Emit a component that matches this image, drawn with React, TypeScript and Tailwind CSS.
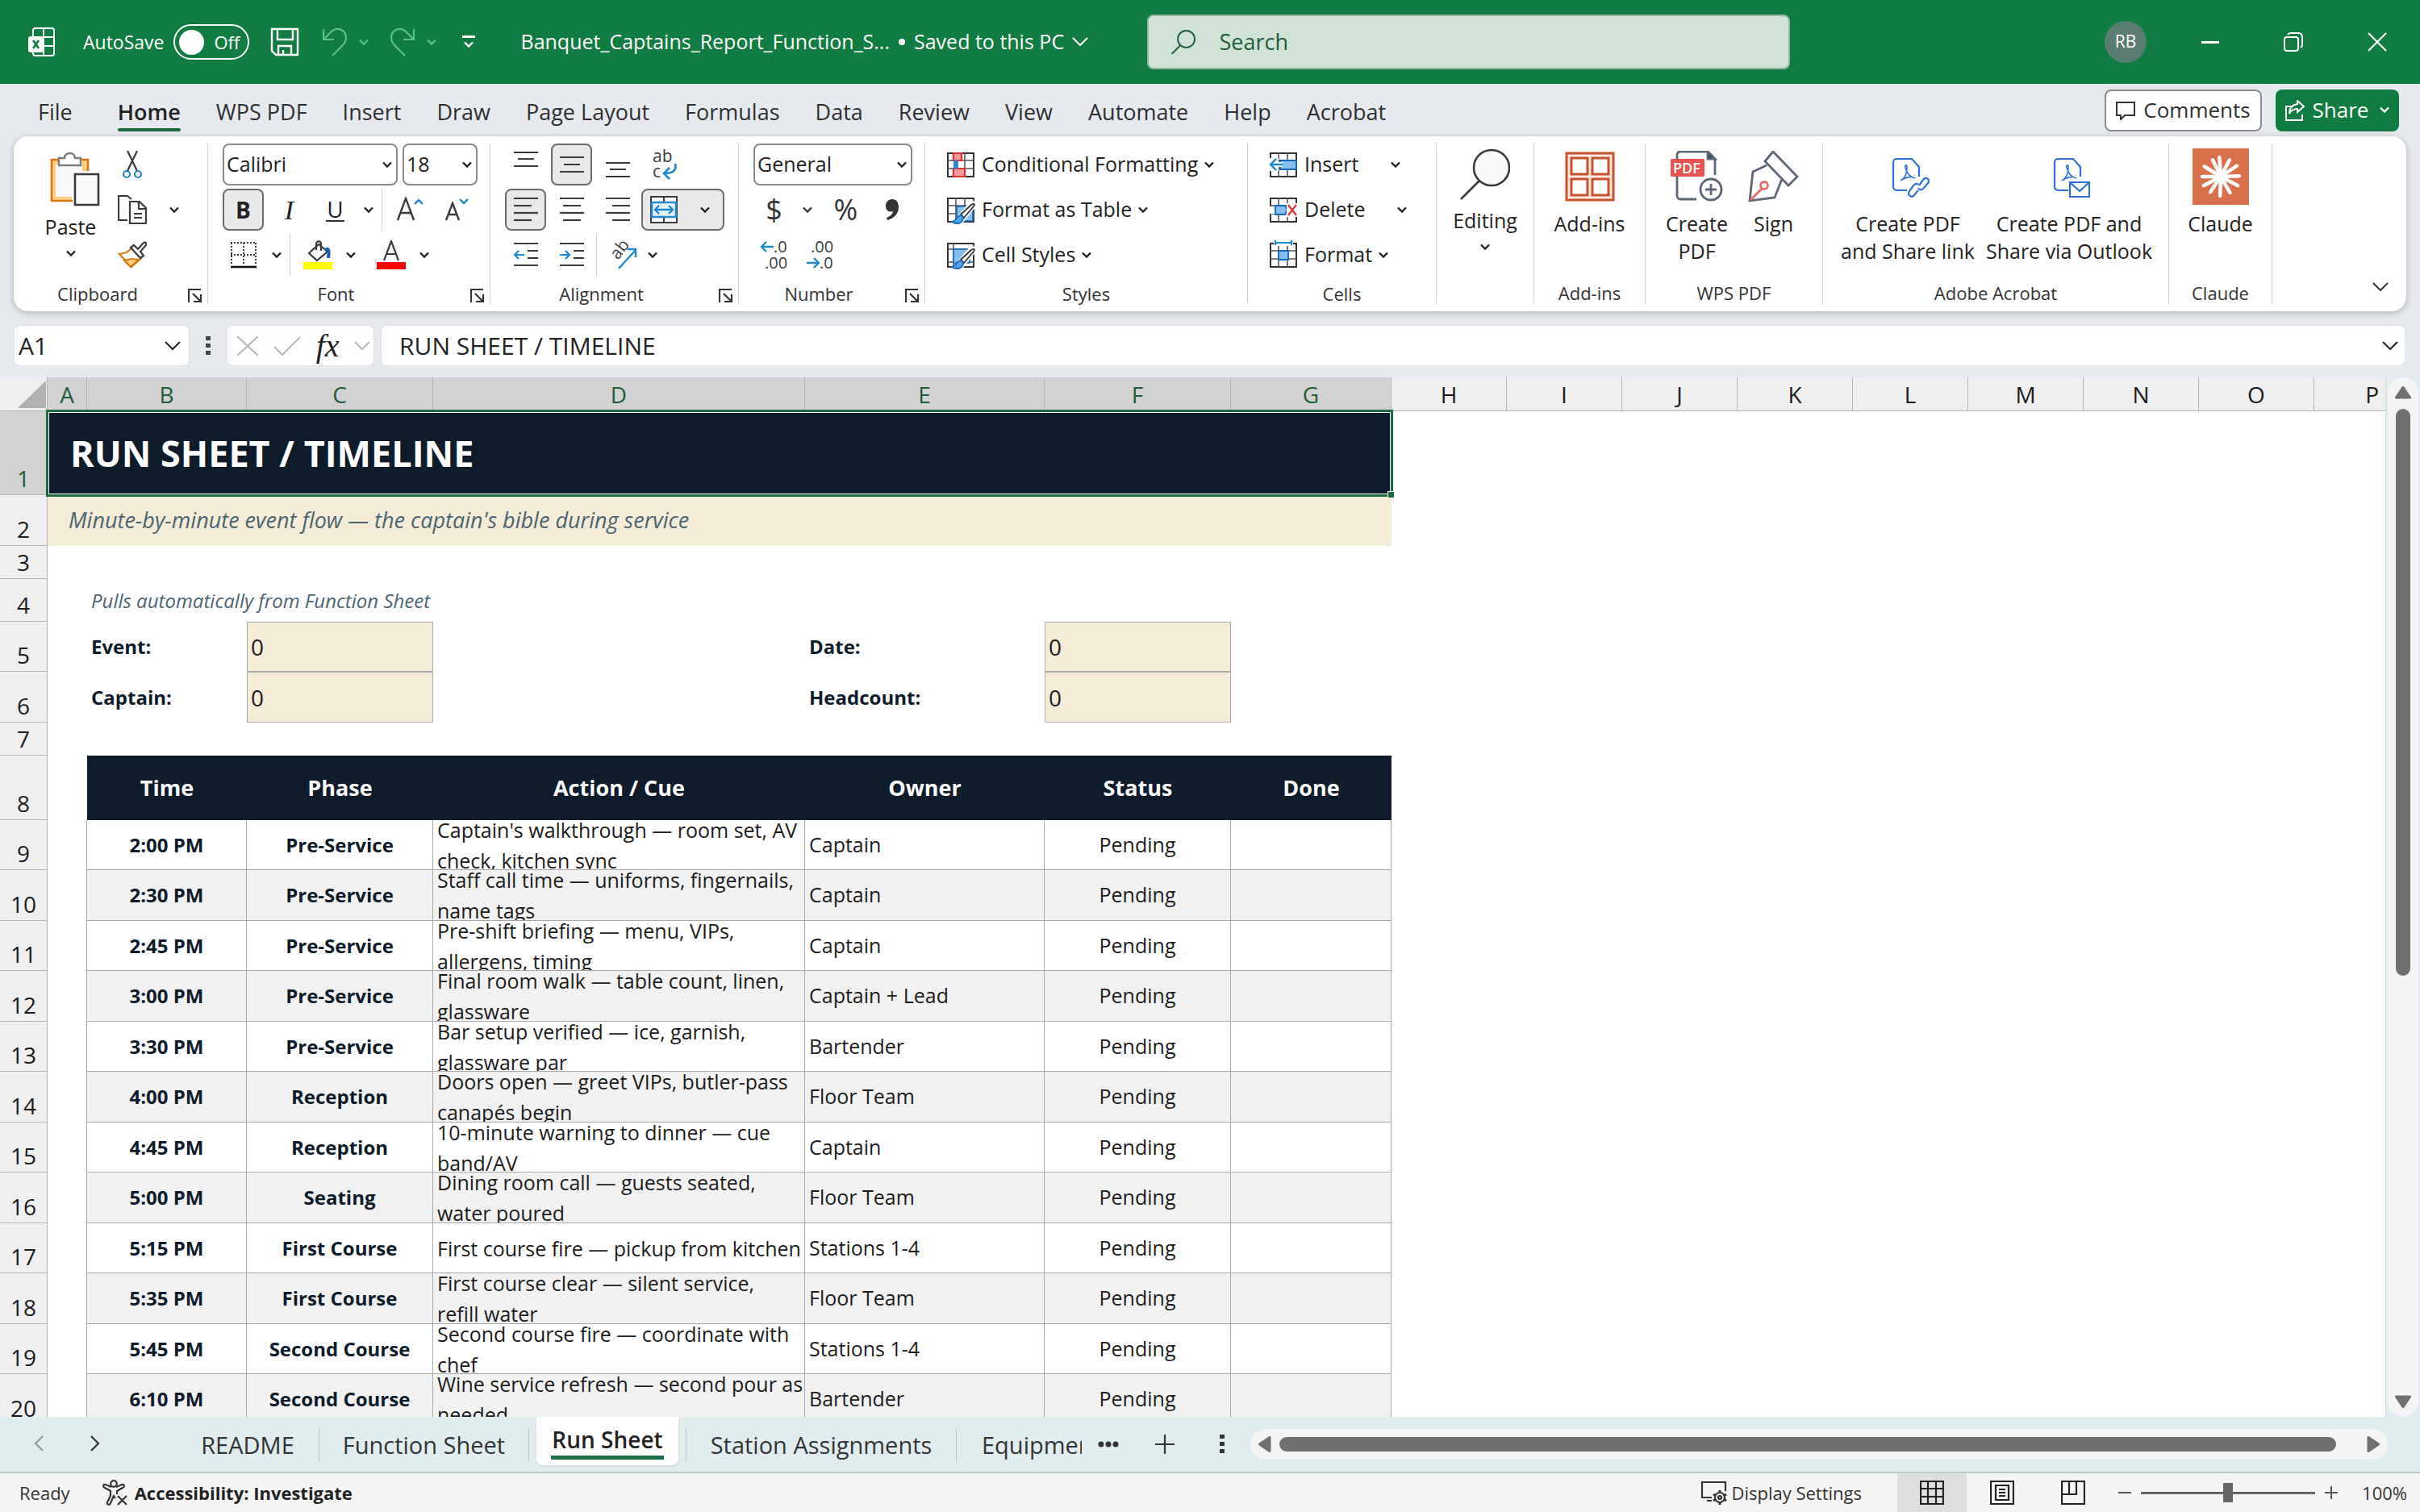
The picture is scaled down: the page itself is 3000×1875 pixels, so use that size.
import type { ReactNode } from 'react';
import clsx from 'clsx';

const tabs = ['File', 'Home', 'WPS PDF', 'Insert', 'Draw', 'Page Layout', 'Formulas', 'Data', 'Review', 'View', 'Automate', 'Help', 'Acrobat'];

const columns = [
	{ name: 'A', width: 'w-[49px]' },
	{ name: 'B', width: 'w-[198px]' },
	{ name: 'C', width: 'w-[231px]' },
	{ name: 'D', width: 'w-[461px]' },
	{ name: 'E', width: 'w-[297px]' },
	{ name: 'F', width: 'w-[231px]' },
	{ name: 'G', width: 'w-[199px]' },
	{ name: 'H', width: 'w-[143px]' },
	{ name: 'I', width: 'w-[143px]' },
	{ name: 'J', width: 'w-[143px]' },
	{ name: 'K', width: 'w-[143px]' },
	{ name: 'L', width: 'w-[143px]' },
	{ name: 'M', width: 'w-[143px]' },
	{ name: 'N', width: 'w-[143px]' },
	{ name: 'O', width: 'w-[143px]' },
	{ name: 'P', width: '' },
];

const events = [
	{ time: '2:00 PM', phase: 'Pre-Service', action: "Captain's walkthrough — room set, AV\ncheck, kitchen sync", owner: 'Captain' },
	{ time: '2:30 PM', phase: 'Pre-Service', action: 'Staff call time — uniforms, fingernails,\nname tags', owner: 'Captain' },
	{ time: '2:45 PM', phase: 'Pre-Service', action: 'Pre-shift briefing — menu, VIPs,\nallergens, timing', owner: 'Captain' },
	{ time: '3:00 PM', phase: 'Pre-Service', action: 'Final room walk — table count, linen,\nglassware', owner: 'Captain + Lead' },
	{ time: '3:30 PM', phase: 'Pre-Service', action: 'Bar setup verified — ice, garnish,\nglassware par', owner: 'Bartender' },
	{ time: '4:00 PM', phase: 'Reception', action: 'Doors open — greet VIPs, butler-pass\ncanapés begin', owner: 'Floor Team' },
	{ time: '4:45 PM', phase: 'Reception', action: '10-minute warning to dinner — cue\nband/AV', owner: 'Captain' },
	{ time: '5:00 PM', phase: 'Seating', action: 'Dining room call — guests seated,\nwater poured', owner: 'Floor Team' },
	{ time: '5:15 PM', phase: 'First Course', action: 'First course fire — pickup from kitchen', owner: 'Stations 1-4' },
	{ time: '5:35 PM', phase: 'First Course', action: 'First course clear — silent service,\nrefill water', owner: 'Floor Team' },
	{ time: '5:45 PM', phase: 'Second Course', action: 'Second course fire — coordinate with\nchef', owner: 'Stations 1-4' },
	{ time: '6:10 PM', phase: 'Second Course', action: 'Wine service refresh — second pour as\nneeded', owner: 'Bartender' },
];

/* ---------- icons ---------- */

function Chevron({ className = 'w-3' }: { className?: string }) {
	return (
		<svg viewBox="0 0 12 9" className={clsx('shrink-0', className)} fill="none" stroke="currentColor" strokeWidth="2.4">
			<path d="M1 1.5l5 5 5-5" />
		</svg>
	);
}

function ThinChevron({ className = 'w-5' }: { className?: string }) {
	return (
		<svg viewBox="0 0 20 12" className={clsx('shrink-0', className)} fill="none" stroke="currentColor" strokeWidth="2">
			<path d="M1 1l9 9 9-9" />
		</svg>
	);
}

function Lines({ rows }: { rows: [number, number, number][] }) {
	return (
		<svg viewBox="0 0 32 32" className="w-8" stroke="#3b3b3b" strokeWidth="2.2">
			{rows.map(([x1, x2, y]) => (
				<path key={y} d={`M${x1} ${y}H${x2}`} />
			))}
		</svg>
	);
}

function ExcelIcon() {
	return (
		<svg viewBox="0 0 34 36" className="w-[34px]" fill="none" stroke="white" strokeWidth="2">
			<path d="M6 12V4a3 3 0 013-3h20a3 3 0 013 3v28a3 3 0 01-3 3H9a3 3 0 01-3-3v-1M19 1v11M19 12h13M19 12v22M19 23h13" />
			<rect x="0" y="11" width="19" height="20" rx="3" fill="white" stroke="none" />
			<path d="M6 16l7 10M13 16L6 26" stroke="#107c41" strokeWidth="2.6" />
		</svg>
	);
}

function SaveIcon() {
	return (
		<svg viewBox="0 0 36 36" className="w-9" fill="none" stroke="white" strokeWidth="2.4">
			<path d="M2 2h32v32H7l-5-5zM9 2v13h19V2M10 34V23h16v11M16 34v-6" />
		</svg>
	);
}

function UndoIcon({ flip }: { flip?: boolean }) {
	return (
		<svg viewBox="0 0 32 36" className={clsx('w-8', flip && '-scale-x-100')} fill="none" stroke="#5cc08b" strokeWidth="2.2">
			<path d="M2 2v13h13M2 15L12 5c6-6 18-3 18 8 0 4-2 7-5 10L13 35" />
		</svg>
	);
}

function PasteIcon() {
	return (
		<svg viewBox="-10 -1 72 69" className="w-[72px]" fill="none">
			<path d="M2 11h44v46H2z" fill="#f8f8f8" />
			<path d="M10 13H4v46h23M40 13h3v11" stroke="#ffcf7f" strokeWidth="6" />
			<path d="M10 10H2v51h26M36 10h11v14" stroke="#d9770f" strokeWidth="2.6" />
			<path d="M11 17V8h7c0-8 13-8 13 0h7v9z" fill="#fff" stroke="#7b7b7b" strokeWidth="2.4" />
			<path d="M31 28h29v38H31z" fill="#fafafa" stroke="#3b3b3b" strokeWidth="2.6" />
		</svg>
	);
}

function CutIcon() {
	return (
		<svg viewBox="0 0 26 36" className="w-[26px]" fill="none" strokeWidth="2.2">
			<path d="M7 1l12 25M19 1L7 26" stroke="#3b3b3b" />
			<circle cx="6" cy="30" r="4" stroke="#1e88cc" />
			<circle cx="20" cy="30" r="4" stroke="#1e88cc" />
		</svg>
	);
}

function CopyIcon() {
	return (
		<svg viewBox="0 0 36 36" className="w-9" fill="#fafafa" stroke="#3b3b3b" strokeWidth="2.2">
			<path d="M12 31H1V1h11l5 4" />
			<path d="M15 8h12l8 8v19H15z" />
			<path d="M26 8v9h9M20 23h10M20 28h10" fill="none" />
		</svg>
	);
}

function BrushIcon() {
	return (
		<svg viewBox="0 0 36 34" className="w-9" fill="none" strokeWidth="2.2">
			<path d="M2 16l9-2 6-5 12 12-12 11z" fill="#fff" stroke="#d9770f" />
			<path d="M8 24l9-2 9 1-10 9z" fill="#ffcf7f" stroke="#d9770f" />
			<path d="M16 8l4-3 5 5 6-7c3-3 6 0 3 3l-6 7 4 5-4 3z" fill="#fff" stroke="#3b3b3b" />
		</svg>
	);
}

function BordersIcon() {
	return (
		<svg viewBox="0 0 34 34" className="w-[34px]" fill="none" stroke="#3b3b3b" strokeWidth="2">
			<path d="M1 2h32M2 2v26M32 2v26M17 2v26M1 17h32" strokeDasharray="2 2" />
			<path d="M1 32h32" stroke="#111" strokeWidth="2.6" />
		</svg>
	);
}

function FillIcon() {
	return (
		<svg viewBox="0 0 36 36" className="w-9" fill="none">
			<path d="M7 16L19 5l11 9-13 11z" fill="#fff" stroke="#3b3b3b" strokeWidth="2.2" />
			<path d="M16 12V5c0-5 6-5 6 0v8" stroke="#3b3b3b" strokeWidth="2.2" />
			<path d="M27 12c5-4 5 2 4 10" stroke="#155fa8" strokeWidth="4" />
			<path d="M0 27h36v9H0z" fill="#ff0" />
		</svg>
	);
}

function FontColorIcon() {
	return (
		<svg viewBox="0 0 36 36" className="w-9" fill="none">
			<path d="M9 25L18 1l9 24M12 17h12" stroke="#3b3b3b" strokeWidth="2.2" />
			<path d="M0 27h36v9H0z" fill="#f00" />
		</svg>
	);
}

function LetterSize({ up }: { up?: boolean }) {
	return (
		<svg viewBox="0 0 34 32" className="w-[34px]" fill="none" strokeWidth="2.4">
			<path d={up ? 'M2 29L12 2l10 27M5 20h14' : 'M5 29L13 8l8 21M8 22h11'} stroke="#3b3b3b" />
			<path d={up ? 'M23 9l5-5 5 5' : 'M22 3l5 5 5-5'} stroke="#1e88cc" />
		</svg>
	);
}

function WrapIcon() {
	return (
		<svg viewBox="0 0 34 42" className="w-[34px] overflow-visible" fill="none">
			<text x="2" y="18" fontSize="21" fill="#3b3b3b" fontFamily="Open Sans">ab</text>
			<text x="2" y="37" fontSize="21" fill="#3b3b3b" fontFamily="Open Sans">c</text>
			<path d="M30 20c2 8-2 12-14 12M23 25l-7 7 7 7" stroke="#1e88cc" strokeWidth="2.6" />
		</svg>
	);
}

function MergeIcon() {
	return (
		<svg viewBox="0 0 34 34" className="w-[34px]" fill="none">
			<path d="M1 1h32v32H1z" fill="#fff" stroke="#3b3b3b" strokeWidth="2" />
			<path d="M17 1v8M17 26v7" stroke="#3b3b3b" strokeWidth="2" />
			<path d="M2 8h30v18H2z" fill="#e4f2fc" stroke="#1e88cc" strokeWidth="2.4" />
			<path d="M6 17h22M11 12l-5 5 5 5M23 12l5 5-5 5" stroke="#1e88cc" strokeWidth="2.4" />
		</svg>
	);
}

function IndentIcon({ out }: { out?: boolean }) {
	return (
		<svg viewBox="0 0 32 32" className="w-8" fill="none" strokeWidth="2.2">
			<path d="M1 2h30M18 11h13M18 20h13M1 29h30" stroke="#3b3b3b" />
			<path d={out ? 'M14 16H2M7 11l-5 5 5 5' : 'M1 16h12M8 11l5 5-5 5'} stroke="#1e88cc" />
		</svg>
	);
}

function OrientationIcon() {
	return (
		<svg viewBox="0 0 36 36" className="w-9 overflow-visible" fill="none">
			<text x="0" y="0" fontSize="21" fill="#3b3b3b" fontFamily="Open Sans" transform="translate(12 25) rotate(-52)">ab</text>
			<path d="M13 35L34 12M24 11h10v10" stroke="#1e88cc" strokeWidth="2.4" />
		</svg>
	);
}

function DecimalIcon({ more }: { more?: boolean }) {
	return (
		<svg viewBox="0 0 36 42" className="w-9 overflow-visible" fill="none">
			<text x={more ? '17' : '6'} y="18" fontSize="20" fill="#3b3b3b" fontFamily="Open Sans">{more ? '.0' : '.00'}</text>
			<text x={more ? '6' : '17'} y="38" fontSize="20" fill="#3b3b3b" fontFamily="Open Sans">{more ? '.00' : '.0'}</text>
			<path d={more ? 'M17 11H2M8 5l-6 6 6 6' : 'M1 31h15M10 25l6 6-6 6'} stroke="#1e88cc" strokeWidth="2.4" />
		</svg>
	);
}

function GridIcon({ kind }: { kind: 'conditional' | 'table' | 'styles' | 'insert' | 'delete' | 'format' }) {
	return (
		<svg viewBox="0 0 36 36" className="w-9 shrink-0" fill="none">
			<path d="M2 4h32v29H2z" fill="#fff" stroke="#333" strokeWidth="2" />
			{kind !== 'styles' && <path d="M12 4v29M23 4v29M2 13h32M2 23h32" stroke="#555" strokeWidth="1.600" />}
			{kind === 'conditional' && (
				<>
					<path d="M9 4h10v9H9zM9 23h14v10H9z" fill="#ff9aa0" stroke="#e0302f" strokeWidth="2.200" />
					<path d="M15 14h7v8h-7z" fill="#fff" />
					<path d="M9 13h6v10H9z" fill="#2e86d6" />
				</>
			)}
			{(kind === 'table' || kind === 'styles') && (
				<>
					{kind === 'styles' && <path d="M9 4v29M2 11h32M2 27h32" stroke="#555" strokeWidth="1.600" />}
					<path d={kind === 'table' ? 'M13 14h20v18H13z' : 'M9 11h20v17H9z'} fill="#83c0f0" stroke="#1467b8" strokeWidth="1.600" />
					<path d="M15 28L32 8l4 4-16 20z" fill="#fff" stroke="#fff" strokeWidth="4" />
					<path d="M18 24L31 12c4-3 5 0 2 3L22 28z" fill="#fff" stroke="#333" strokeWidth="1.800" />
					<path d="M19 25c-7-1-5 7-12 8 6 4 14 2 14-5z" fill="#4ea3ea" stroke="#1467b8" strokeWidth="1.600" />
				</>
			)}
			{kind === 'insert' && (
				<>
					<path d="M14 13h20v11H14z" fill="#83c0f0" stroke="#1467b8" strokeWidth="1.800" />
					<path d="M0 10h12v16H0z" fill="#fff" />
					<path d="M17 18H2M9 11l-7 7 7 7" stroke="#fff" strokeWidth="6" />
					<path d="M17 18H2M9 11l-7 7 7 7" stroke="#1e88cc" strokeWidth="2.400" />
				</>
			)}
			{kind === 'delete' && (
				<>
					<path d="M0 14h7v9H0z" fill="#fff" />
					<path d="M8 13h12l3 5-3 6H8z" fill="#83c0f0" stroke="#1467b8" strokeWidth="1.800" />
					<path d="M22 10h14v17H22z" fill="#fff" />
					<path d="M24 12l10 13M34 12L24 25" stroke="#e0302f" strokeWidth="2.200" />
				</>
			)}
			{kind === 'format' && (
				<>
					<path d="M6 0h24v7H6z" fill="#fff" />
					<path d="M12 13h12v11H12z" fill="#83c0f0" stroke="#1467b8" strokeWidth="1.800" />
					<path d="M8 0v6M28 0v6M8 3h20" stroke="#1e88cc" strokeWidth="2.200" />
				</>
			)}
		</svg>
	);
}

function Magnifier({ className, fill = 'none' }: { className: string; fill?: string }) {
	return (
		<svg viewBox="0 0 62 64" className={className} fill={fill} stroke="currentColor" strokeWidth="2.6">
			<circle cx="39" cy="24" r="22" />
			<path d="M24 40L1 63" />
		</svg>
	);
}

function AddinsIcon() {
	return (
		<svg viewBox="0 0 62 62" className="w-[62px]" fill="#fff" stroke="#c8502b" strokeWidth="3">
			<path d="M2 2h58v58H2z" fill="#fbe9e3" />
			<path d="M8 8h20v20H8zM34 8h20v20H34zM8 34h20v20H8zM34 34h20v20H34z" />
		</svg>
	);
}

function PdfCreateIcon() {
	return (
		<svg viewBox="0 0 66 64" className="w-[66px]" fill="none" stroke="#5d6675" strokeWidth="2.8">
			<path d="M8 10V5a4 4 0 014-4h34l9 9v20M8 32v24a4 4 0 004 4h20" />
			<path d="M46 1v9h9z" fill="#2f3747" />
			<circle cx="50" cy="48" r="13" />
			<path d="M50 41v14M43 48h14" />
			<rect x="0" y="10" width="42" height="22" rx="2" fill="#e85250" stroke="none" />
			<text x="3" y="28" fontSize="18" fontWeight="600" fill="#fff" stroke="none" fontFamily="Open Sans">PDF</text>
		</svg>
	);
}

function SignIcon() {
	return (
		<svg viewBox="0 0 64 64" className="w-16" fill="none" stroke="#5d6675" strokeWidth="2.8">
			<path d="M31 1L21 13l29 30 11-11zM23 18L6 26 2 62l31-4 9-23" />
			<path d="M3 61l15-15" stroke="#e8696a" />
			<circle cx="20" cy="43" r="4.500" stroke="#e8696a" />
		</svg>
	);
}

function AcrobatIcon({ mail }: { mail?: boolean }) {
	return (
		<svg viewBox="-8 -4 54 54" className="w-[54px]" fill="none" stroke="#3070d6" strokeWidth="2.2">
			<path d="M18 40H5a4 4 0 01-4-4V5a4 4 0 014-4h19l9 10v12" />
			<path d="M10 28c6-3 8-9 8-17 0-3-3-3-2 1 2 7 6 12 12 13-5-3-13-1-18 3z" strokeWidth="1.600" />
			{mail ? (
				<path d="M20 30h24v18H20zM20 30l12 11 12-11" />
			) : (
				<path d="M33 34l5-7c4-5 9 0 6 4l-6 7c-2 2-5 2-6-1M32 33c-2-2-4-1-6 1l-5 7c-3 5 3 9 6 5l5-6" />
			)}
		</svg>
	);
}

function ClaudeIcon() {
	const rays = [-4, 28, 56, 88, 118, 150, 182, 214, 242, 270, 302, 334];
	return (
		<svg viewBox="0 0 70 70" className="w-[70px]">
			<path d="M0 0h70v70H0z" fill="#d9704c" />
			<g stroke="#fff" strokeWidth="4.500" strokeLinecap="round">
				{rays.map((a, i) => (
					<path key={a} d={i % 2 ? 'M35 35V12' : 'M35 35V11'} transform={`rotate(${a} 35 35)`} />
				))}
			</g>
		</svg>
	);
}

function Launcher() {
	return (
		<button aria-label="More options" className="absolute right-[6px] top-2">
			<svg viewBox="0 0 18 18" className="w-[18px]" fill="none" stroke="#333" strokeWidth="2.2">
				<path d="M1 17V1h15M6 6l10 10M16 7v9H7" />
			</svg>
		</button>
	);
}

/* ---------- ribbon ---------- */

function Group({ label, width, launcher, children }: { label?: string; width: string; launcher?: boolean; children: ReactNode }) {
	return (
		<section className={clsx('my-[9px] flex shrink-0 flex-col border-r border-[#d0d0d0]', width)}>
			<div className="h-[164px]">{children}</div>
			<div className={clsx('relative mt-2 h-[28px] text-center text-[22px] leading-[28px] text-[#333]', launcher && 'pr-8')}>
				{label}
				{launcher && <Launcher />}
			</div>
		</section>
	);
}

function Btn({ label, on, className = 'w-[51px]', children }: { label: string; on?: boolean; className?: string; children: ReactNode }) {
	return (
		<button
			aria-label={label}
			className={clsx('flex h-[52px] shrink-0 items-center justify-center rounded-lg', on && 'border-2 border-[#6b6b6b] bg-[#e9e9e9]', className)}
		>
			{children}
		</button>
	);
}

function Select({ label, value, width }: { label: string; value: string; width: string }) {
	return (
		<div className={clsx('relative h-[52px]', width)}>
			<select aria-label={label} className="size-full appearance-none rounded-lg border-2 border-[#8a8a8a] bg-white px-[3px] text-[25px]">
				<option>{value}</option>
			</select>
			<Chevron className="pointer-events-none absolute right-[7px] top-[22px] w-3" />
		</div>
	);
}

function Rule() {
	return <div className="h-[52px] w-px shrink-0 bg-[#d0d0d0]" />;
}

function LargeBtn({ icon, className, children }: { icon: ReactNode; className?: string; children: ReactNode }) {
	return (
		<button className={clsx('flex flex-col items-center text-center text-[25px] leading-[34px]', className)}>
			<span className="flex h-[82px] items-center justify-center">{icon}</span>
			<span className="whitespace-pre-line">{children}</span>
		</button>
	);
}

function Ribbon() {
	return (
		<div className="mx-[17px] flex h-[217px] shrink-0 overflow-hidden rounded-[18px] bg-white text-[25px] shadow-[0_2px_8px_rgba(0,0,0,0.25)]">
			<Group label="Clipboard" width="w-[241px]" launcher>
				<div className="flex h-full">
					<button className="flex w-[125px] flex-col items-center pl-4 pt-[9px]">
						<PasteIcon />
						<span className="mt-2 leading-[34px]">Paste</span>
						<Chevron className="mt-3 w-3" />
					</button>
					<div className="flex flex-col items-center gap-1">
						<Btn label="Cut" className="w-11"><CutIcon /></Btn>
						<Btn label="Copy" className="w-11"><CopyIcon /></Btn>
						<Btn label="Format Painter" className="w-11"><BrushIcon /></Btn>
					</div>
					<button aria-label="Copy options" className="flex h-full w-[60px] items-center justify-center"><Chevron /></button>
				</div>
			</Group>
			<Group label="Font" width="w-[350px]" launcher>
				<div className="flex flex-col gap-1 pl-[18px]">
					<div className="flex gap-[6px]">
						<Select label="Font" value="Calibri" width="w-[217px]" />
						<Select label="Font size" value="18" width="w-[93px]" />
					</div>
					<div className="flex">
						<Btn label="Bold" on><span className="text-[28px] font-bold">B</span></Btn>
						<Btn label="Italic" className="ml-[6px] w-[51px]"><span className="font-['Liberation_Serif'] text-[34px] italic">I</span></Btn>
						<Btn label="Underline" className="ml-[6px] w-[51px]"><span className="border-b-2 border-[#333] px-[1px] text-[28px] leading-[28px]">U</span></Btn>
						<Btn label="Underline options" className="w-8"><Chevron /></Btn>
						<Rule />
						<Btn label="Increase font size" className="ml-2 w-[51px]"><LetterSize up /></Btn>
						<Btn label="Decrease font size" className="ml-[6px] w-[51px]"><LetterSize /></Btn>
					</div>
					<div className="flex">
						<Btn label="Borders"><BordersIcon /></Btn>
						<Btn label="Border options" className="w-8"><Chevron /></Btn>
						<Rule />
						<Btn label="Fill color" className="ml-2 w-[51px]"><FillIcon /></Btn>
						<Btn label="Fill options" className="w-8"><Chevron /></Btn>
						<Btn label="Font color" className="ml-2 w-[51px]"><FontColorIcon /></Btn>
						<Btn label="Font color options" className="w-8"><Chevron /></Btn>
					</div>
				</div>
			</Group>
			<Group label="Alignment" width="w-[308px]" launcher>
				<div className="flex flex-col gap-1 pl-[18px]">
					<div className="flex gap-[6px]">
						<Btn label="Top align"><Lines rows={[[1, 31, 1], [6, 26, 9], [1, 31, 18]]} /></Btn>
						<Btn label="Middle align" on><Lines rows={[[1, 31, 7], [6, 26, 16], [1, 31, 25]]} /></Btn>
						<Btn label="Bottom align"><Lines rows={[[1, 31, 14], [6, 26, 22], [1, 31, 31]]} /></Btn>
						<Btn label="Wrap text" className="w-[54px]"><WrapIcon /></Btn>
					</div>
					<div className="flex gap-[6px]">
						<Btn label="Align left" on><Lines rows={[[1, 31, 2], [1, 23, 11], [1, 31, 20], [1, 23, 29]]} /></Btn>
						<Btn label="Center"><Lines rows={[[1, 31, 2], [5, 27, 11], [1, 31, 20], [5, 27, 29]]} /></Btn>
						<Btn label="Align right"><Lines rows={[[1, 31, 2], [9, 31, 11], [1, 31, 20], [9, 31, 29]]} /></Btn>
						<Btn label="Merge and center" on className="-ml-[2px] w-[103px] gap-7 pr-2"><MergeIcon /><Chevron /></Btn>
					</div>
					<div className="flex">
						<Btn label="Decrease indent"><IndentIcon out /></Btn>
						<Btn label="Increase indent" className="ml-[6px] w-[51px]"><IndentIcon /></Btn>
						<div className="w-[5px]" />
						<Rule />
						<Btn label="Orientation" className="ml-[6px] w-[51px]"><OrientationIcon /></Btn>
						<Btn label="Orientation options" className="w-6"><Chevron /></Btn>
					</div>
				</div>
			</Group>
			<Group label="Number" width="w-[231px]" launcher>
				<div className="flex flex-col gap-1 pl-[18px]">
					<Select label="Number format" value="General" width="w-[197px]" />
					<div className="flex text-[36px] text-[#333]">
						<Btn label="Accounting format">$</Btn>
						<Btn label="Accounting options" className="w-8"><Chevron /></Btn>
						<Btn label="Percent style" className="ml-[6px] w-[51px]">%</Btn>
						<Btn label="Comma style" className="ml-[6px] w-[51px]">
							<svg viewBox="0 0 18 28" className="w-[18px]" fill="#333"><path d="M9 1c6 0 8 5 8 10 0 8-6 14-14 16l-1-3c5-2 8-5 8-8-6 2-9-2-9-7 0-4 3-8 8-8z" /></svg>
						</Btn>
					</div>
					<div className="flex gap-[6px]">
						<Btn label="Increase decimal"><DecimalIcon more /></Btn>
						<Btn label="Decrease decimal"><DecimalIcon /></Btn>
					</div>
				</div>
			</Group>
			<Group label="Styles" width="w-[400px]">
				<div className="flex flex-col items-start gap-1 pl-[26px]">
					<button className="flex h-[52px] items-center gap-2"><GridIcon kind="conditional" />Conditional Formatting<Chevron /></button>
					<button className="flex h-[52px] items-center gap-2"><GridIcon kind="table" />Format as Table<Chevron /></button>
					<button className="flex h-[52px] items-center gap-2"><GridIcon kind="styles" />Cell Styles<Chevron /></button>
				</div>
			</Group>
			<Group label="Cells" width="w-[234px]">
				<div className="flex flex-col items-start gap-1 pl-[26px]">
					<button className="flex h-[52px] items-center gap-2"><GridIcon kind="insert" />Insert<Chevron className="ml-8 w-3" /></button>
					<button className="flex h-[52px] items-center gap-2"><GridIcon kind="delete" />Delete<Chevron className="ml-8 w-3" /></button>
					<button className="flex h-[52px] items-center gap-2"><GridIcon kind="format" />Format<Chevron /></button>
				</div>
			</Group>
			<Group width="w-[121px]">
				<button className="flex w-full flex-col items-center pt-[6px]">
					<Magnifier className="w-[62px] text-[#3b3b3b]" fill="#fafafa" />
					<span className="mt-2 leading-[34px]">Editing</span>
					<Chevron className="mt-3 w-3" />
				</button>
			</Group>
			<Group label="Add-ins" width="w-[138px]">
				<LargeBtn icon={<AddinsIcon />} className="w-full">Add-ins</LargeBtn>
			</Group>
			<Group label="WPS PDF" width="w-[220px]">
				<div className="flex pl-4">
					<LargeBtn icon={<PdfCreateIcon />} className="w-[95px]">{'Create\nPDF'}</LargeBtn>
					<LargeBtn icon={<SignIcon />} className="w-[95px]">Sign</LargeBtn>
				</div>
			</Group>
			<Group label="Adobe Acrobat" width="w-[429px]">
				<div className="flex pl-[10px]">
					<LargeBtn icon={<AcrobatIcon />} className="w-[190px]">{'Create PDF\nand Share link'}</LargeBtn>
					<LargeBtn icon={<AcrobatIcon mail />} className="w-[210px]">{'Create PDF and\nShare via Outlook'}</LargeBtn>
				</div>
			</Group>
			<Group label="Claude" width="w-[128px]">
				<LargeBtn icon={<ClaudeIcon />} className="w-full">Claude</LargeBtn>
			</Group>
			<button aria-label="Collapse ribbon" className="mb-6 ml-auto mr-[22px] self-end text-[#333]"><ThinChevron /></button>
		</div>
	);
}

/* ---------- bars ---------- */

function TitleBar() {
	return (
		<header className="flex h-[104px] shrink-0 items-center bg-[#107c41] text-[25px] text-white">
			<div className="flex w-[1422px] shrink-0 items-center pl-[35px]">
				<ExcelIcon />
				<label className="ml-[34px] flex items-center gap-3">
					<span className="text-[23px]">AutoSave</span>
					<input type="checkbox" className="peer sr-only" />
					<span className="flex h-11 w-[94px] items-center gap-3 rounded-full border-2 border-white pl-[5px] text-[22px]">
						<span className="size-[31px] rounded-full bg-white" />
						Off
					</span>
				</label>
				<button aria-label="Save" className="ml-[26px]"><SaveIcon /></button>
				<button aria-label="Undo" className="ml-7 flex items-center gap-[14px] text-[#5cc08b]"><UndoIcon /><Chevron /></button>
				<button aria-label="Redo" className="ml-[26px] flex items-center gap-[14px] text-[#5cc08b]"><UndoIcon flip /><Chevron /></button>
				<button aria-label="Customize toolbar" className="ml-8 flex w-4 flex-col items-center gap-1">
					<span className="h-[3px] w-4 bg-white" />
					<Chevron />
				</button>
				<button className="ml-[56px] flex items-center whitespace-nowrap">
					Banquet_Captains_Report_Function_S...
					<span className="mx-[11px] size-2 rounded-full bg-white" />
					Saved to this PC
					<ThinChevron className="ml-[10px] w-5" />
				</button>
			</div>
			<label className="flex h-[68px] w-[797px] items-center gap-[30px] rounded-lg border-2 border-[#8fb8a0] bg-[#cfe3d7] pl-[28px] text-[#1e5c3a]">
				<Magnifier className="w-8 [stroke-width:4]" />
				<input type="text" placeholder="Search" className="w-full bg-transparent text-[27px] outline-none placeholder:text-[#1e5c3a]" />
			</label>
			<div className="ml-auto flex items-center pr-[41px]">
				<button className="mr-[68px] size-[52px] rounded-full bg-[#5a7d72] text-[21px]">RB</button>
				<button aria-label="Minimize" className="mr-20 h-[3px] w-[22px] bg-white" />
				<button aria-label="Restore" className="mr-20">
					<svg viewBox="0 0 24 24" className="w-6" fill="none" stroke="white" strokeWidth="2">
						<rect x="1" y="6" width="17" height="17" rx="3" />
						<path d="M5 3c1-2 2-2 4-2h9c3 0 5 2 5 5v9c0 2 0 3-2 4" />
					</svg>
				</button>
				<button aria-label="Close">
					<svg viewBox="0 0 24 24" className="w-6" stroke="white" strokeWidth="2.2"><path d="M1 1l22 22M23 1L1 23" /></svg>
				</button>
			</div>
		</header>
	);
}

function TabRow() {
	return (
		<nav className="flex h-[65px] shrink-0 items-center pl-[47px] pr-[26px] text-[26px] text-[#2f2f2f]">
			<div className="flex gap-11 pt-1 text-[27px]">
				{tabs.map((tab) => (
					<button key={tab} className={clsx('relative leading-[36px]', tab === 'File' && 'pr-3', tab === 'Home' && 'font-semibold text-[#222]')}>
						{tab}
						{tab === 'Home' && <span className="absolute inset-x-0 -bottom-[6px] h-1 rounded-full bg-[#17693c]" />}
					</button>
				))}
			</div>
			<div className="ml-auto flex gap-[17px]">
				<button className="flex h-[52px] w-[195px] items-center justify-center gap-[10px] rounded-lg border-2 border-[#8a8a8a] bg-white">
					<svg viewBox="0 0 24 24" className="w-6" fill="none" stroke="#333" strokeWidth="2"><path d="M1 2h22v16H11l-5 5v-5H1z" /></svg>
					Comments
				</button>
				<button className="flex h-[52px] w-[153px] items-center justify-center gap-[10px] rounded-lg bg-[#107c41] text-white">
					<svg viewBox="0 0 24 26" className="w-6" fill="none" stroke="white" strokeWidth="2"><path d="M8 8H1v17h20v-7M15 1l8 7-8 7v-4c-5 0-8 2-10 6 0-7 4-11 10-12z" /></svg>
					Share
					<Chevron className="ml-1 w-3" />
				</button>
			</div>
		</nav>
	);
}

function FormulaBar() {
	return (
		<div className="mt-[17px] flex h-[51px] shrink-0 items-center pl-[17px] pr-[18px] text-[30px] text-[#222]">
			<div className="flex h-full w-[218px] items-center rounded-lg border border-[#dcdfe3] bg-white pl-[5px] pr-[10px]">
				<input aria-label="Name box" defaultValue="A1" className="w-full min-w-0 bg-transparent outline-none" />
				<ThinChevron />
			</div>
			<svg viewBox="0 0 6 24" className="mx-5 w-[6px]" fill="#444"><path d="M0 0h6v5H0zM0 9h6v5H0zM0 18h6v5H0z" /></svg>
			<div className="flex h-full w-[183px] items-center justify-between rounded-lg border border-[#dcdfe3] bg-white pl-[11px] pr-1 text-[#b5b5b5]">
				<button aria-label="Cancel"><svg viewBox="0 0 28 26" className="w-7" fill="none" stroke="currentColor" strokeWidth="2"><path d="M1 1l26 24M27 1L1 25" /></svg></button>
				<button aria-label="Enter"><svg viewBox="0 0 34 24" className="w-[34px]" fill="none" stroke="currentColor" strokeWidth="2"><path d="M1 13l10 10L33 1" /></svg></button>
				<button className="font-['Liberation_Serif'] text-[40px] italic leading-[40px] text-[#222]">fx</button>
				<ThinChevron />
			</div>
			<div className="ml-2 flex h-full flex-1 items-center rounded-lg border border-[#dcdfe3] bg-white pl-[22px] pr-2">
				<input aria-label="Formula" defaultValue="RUN SHEET / TIMELINE" className="w-full bg-transparent outline-none" />
				<ThinChevron />
			</div>
		</div>
	);
}

/* ---------- grid ---------- */

function RowHead({ n, selected }: { n: number; selected?: boolean }) {
	return (
		<th
			scope="row"
			className={clsx(
				'border-b border-r border-[#b4b4b4] p-0 pb-1 text-center align-bottom text-[28px] font-normal leading-[32px]',
				selected ? 'bg-[#d2d2d2] text-[#1f5c3a]' : 'bg-[#efefef] text-[#1b1b1b]',
			)}
		>
			{n}
		</th>
	);
}

function InfoRow({ n, height, left, right }: { n: number; height: string; left: string; right: string }) {
	const box = 'border border-[#a9a9a9] bg-[#f4ecd6] p-0 pl-1 text-[28px] text-[#1b1b1b]';
	return (
		<tr className={height}>
			<RowHead n={n} />
			<td />
			<td className="p-0 pl-[5px] font-bold text-[#0d1b2a]">{left}</td>
			<td className={box}>0</td>
			<td />
			<td className="p-0 pl-[5px] font-bold text-[#0d1b2a]">{right}</td>
			<td className={box}>0</td>
			<td colSpan={10} />
		</tr>
	);
}

function Sheet() {
	return (
		<table className="w-full table-fixed border-separate border-spacing-0 bg-white text-[24px]">
			<colgroup>
				<col className="w-[59px]" />
				{columns.map((c) => (
					<col key={c.name} className={c.width} />
				))}
			</colgroup>
			<thead>
				<tr className="h-[42px] text-[28px] leading-[38px]">
					<th className="border-b border-r border-[#b4b4b4] bg-[#efefef] p-0">
						<svg viewBox="0 0 36 34" className="ml-auto w-9" fill="#b1b1b1"><path d="M35 0v34H0z" /></svg>
					</th>
					{columns.map((c, i) => (
						<th
							key={c.name}
							scope="col"
							className={clsx(
								'border-b border-[#b4b4b4] p-0 font-normal',
								i < 7 ? 'bg-[#d2d2d2] text-[#1f5c3a]' : 'bg-[#efefef] text-[#1b1b1b]',
								c.name === 'P' ? 'pr-2 text-right' : 'border-r',
							)}
						>
							{c.name}
						</th>
					))}
				</tr>
			</thead>
			<tbody>
				<tr className="h-[104px]">
					<RowHead n={1} selected />
					<td colSpan={7} className="relative bg-[#0d1b2a] p-0 pl-7 text-[45px] font-bold text-white">
						RUN SHEET / TIMELINE
						<div className="absolute -inset-[2px] border-[3px] border-[#1e6b41]">
							<div className="size-full border border-white" />
							<div className="absolute -bottom-1 -right-1 size-2 border-l border-t border-white bg-[#1e6b41]" />
						</div>
					</td>
					<td colSpan={9} />
				</tr>
				<tr className="h-[63px]">
					<RowHead n={2} />
					<td colSpan={7} className="bg-[#f4ecd6] p-0 pl-[26px] text-[27px] italic text-[#4b6472]">
						Minute-by-minute event flow — the captain's bible during service
					</td>
					<td colSpan={9} />
				</tr>
				<tr className="h-[41px]">
					<RowHead n={3} />
					<td colSpan={16} />
				</tr>
				<tr className="h-[53px]">
					<RowHead n={4} />
					<td />
					<td colSpan={2} className="p-0 pl-[5px] italic text-[#4b6472]">Pulls automatically from Function Sheet</td>
					<td colSpan={13} />
				</tr>
				<InfoRow n={5} height="h-[62px]" left="Event:" right="Date:" />
				<InfoRow n={6} height="h-[63px]" left="Captain:" right="Headcount:" />
				<tr className="h-[41px]">
					<RowHead n={7} />
					<td colSpan={16} />
				</tr>
				<tr className="h-[80px] text-[27px] font-bold text-white">
					<RowHead n={8} />
					<td />
					{['Time', 'Phase', 'Action / Cue', 'Owner', 'Status', 'Done'].map((h) => (
						<td key={h} className="bg-[#0d1b2a] p-0 text-center">{h}</td>
					))}
					<td colSpan={9} />
				</tr>
				{events.map((e, i) => {
					const cell = clsx('border-b border-r border-[#a9a9a9] p-0', i % 2 && 'bg-[#f1f1f1]');
					return (
						<tr key={e.time} className={clsx('text-[25px] text-[#1b1b1b]', i % 2 ? 'h-[63px]' : 'h-[62px]')}>
							<RowHead n={i + 9} />
							<td className="border-r border-[#a9a9a9]" />
							<td className={clsx(cell, 'text-center text-[24px] font-bold text-[#0d1b2a]')}>{e.time}</td>
							<td className={clsx(cell, 'text-center text-[24px] font-bold text-[#0d1b2a]')}>{e.phase}</td>
							<td className={cell}>
								<div className="flex h-[61px] items-center overflow-hidden whitespace-pre pl-[5px] leading-[38px]">{e.action}</div>
							</td>
							<td className={clsx(cell, 'pl-[5px]')}>{e.owner}</td>
							<td className={clsx(cell, 'text-center')}>Pending</td>
							<td className={cell} />
							<td colSpan={9} />
						</tr>
					);
				})}
			</tbody>
		</table>
	);
}

function Arrow({ className }: { className?: string }) {
	return (
		<svg viewBox="0 0 20 16" className={clsx('w-5 shrink-0', className)} fill="#707070">
			<path d="M8 1.500c1-2 3-2 4 0l8 12c1 1 0 2-2 2H2c-2 0-3-1-2-2z" />
		</svg>
	);
}

function SheetTabs() {
	const tab = 'flex h-10 items-center whitespace-nowrap border-r border-[#bcc8c8]';
	return (
		<div className="flex h-[70px] shrink-0 items-start border-b-2 border-[#bfc7c7] bg-[#e0edee] text-[29px] text-[#333]">
			<div className="flex h-[66px] w-[219px] items-center pl-[42px]">
				<button aria-label="Previous sheet"><svg viewBox="0 0 12 20" className="w-3" fill="none" stroke="#8f9a9a" strokeWidth="2.2"><path d="M11 1L2 10l9 9" /></svg></button>
				<button aria-label="Next sheet" className="ml-[58px]"><svg viewBox="0 0 12 20" className="w-3" fill="none" stroke="#333" strokeWidth="2.2"><path d="M1 1l9 9-9 9" /></svg></button>
			</div>
			<div className="flex h-[70px] items-center">
				<button className={clsx(tab, 'w-[177px] justify-center')}>README</button>
				<button className={clsx(tab, 'w-[260px] justify-center')}>Function Sheet</button>
				<div className="h-full w-[194px] px-[9px]">
					<button className="h-[60px] w-full rounded-b-lg bg-white px-[18px] text-[28px] font-semibold text-[#222] shadow-sm">
						<span className="block border-b-[5px] border-[#1b7145] leading-[40px]">Run Sheet</span>
					</button>
				</div>
				<button className={clsx(tab, 'w-[336px] justify-center border-l')}>Station Assignments</button>
				<button className="w-[155px] overflow-hidden pl-[31px] text-left"><span className="block overflow-hidden whitespace-nowrap">Equipment</span></button>
			</div>
			<div className="flex h-[68px] flex-1 items-center">
				<button aria-label="More sheets" className="ml-5"><svg viewBox="0 0 26 8" className="w-[26px]" fill="#333"><circle cx="4" cy="4" r="3.500" /><circle cx="13" cy="4" r="3.500" /><circle cx="22" cy="4" r="3.500" /></svg></button>
				<button aria-label="New sheet" className="ml-11"><svg viewBox="0 0 26 26" className="w-[26px]" stroke="#333" strokeWidth="2.2"><path d="M13 1v24M1 13h24" /></svg></button>
				<svg viewBox="0 0 6 24" className="ml-[55px] w-[6px]" fill="#333"><path d="M0 0h6v5H0zM0 9h6v5H0zM0 18h6v5H0z" /></svg>
				<div className="ml-[32px] mr-10 flex h-[38px] flex-1 items-center rounded-full bg-[#f4f4f4] px-2">
					<Arrow className="-rotate-90" />
					<div className="ml-2 mr-9 h-[18px] flex-1 rounded-full bg-[#707070]" />
					<Arrow className="rotate-90" />
				</div>
			</div>
		</div>
	);
}

function StatusBar() {
	return (
		<footer className="flex h-[48px] shrink-0 items-center bg-[#f4f4f4] pl-6 text-[22px] text-[#333]">
			<span>Ready</span>
			<button className="ml-10 flex items-center gap-2 font-bold text-[#222]">
				<svg viewBox="0 0 32 32" className="w-8" fill="none" stroke="#333" strokeWidth="2.2">
					<circle cx="14" cy="5" r="3.800" />
					<path d="M11 9L4 6c-3-1-4 3-1 4l7 4v6L6 28c-1 3 3 4 4 1l4-9 2 3M17 9l7-3c3-1 4 3 1 4l-7 4v4M19 20l11 11M30 20L19 31" />
				</svg>
				Accessibility: Investigate
			</button>
			<div className="ml-auto flex h-full items-center pr-4">
				<button className="mr-11 flex items-center gap-1">
					<svg viewBox="0 0 34 32" className="w-[34px]" fill="none" stroke="#333" strokeWidth="2.2">
						<path d="M14 22H2V3h29v11M8 26h6" />
						<circle cx="24" cy="22" r="6" />
						<circle cx="24" cy="22" r="2" />
						<path d="M24 13v3M24 28v3M16 18l3 2M29 24l3 2M16 26l3-2M29 20l3-2" strokeWidth="3" />
					</svg>
					Display Settings
				</button>
				<button aria-label="Normal view" className="flex h-full w-[86px] items-center justify-center bg-[#dfdfdf]">
					<svg viewBox="0 0 30 30" className="w-[30px]" fill="none" stroke="#222" strokeWidth="2.2"><path d="M1 1h28v28H1zM10 1v28M20 1v28M1 10h28M1 20h28" /></svg>
				</button>
				<button aria-label="Page layout view" className="flex w-[88px] justify-center">
					<svg viewBox="0 0 30 30" className="w-[30px]" fill="none" stroke="#222" strokeWidth="2.2"><path d="M1 1h28v28H1zM7 6h16v18H7zM11 11h8M11 15h8M11 19h8" /></svg>
				</button>
				<button aria-label="Page break view" className="flex w-[88px] justify-center">
					<svg viewBox="0 0 30 30" className="w-[30px]" fill="none" stroke="#222" strokeWidth="2.2"><path d="M1 1h28v28H1zM1 17h18V1M10 1v16" /></svg>
				</button>
				<button aria-label="Zoom out" className="ml-3 h-[2px] w-4 bg-[#555]" />
				<input
					type="range"
					aria-label="Zoom"
					defaultValue={50}
					className="ml-3 h-6 w-[216px] appearance-none bg-transparent [&::-webkit-slider-runnable-track]:h-[3px] [&::-webkit-slider-runnable-track]:bg-[#666] [&::-webkit-slider-thumb]:-mt-[11px] [&::-webkit-slider-thumb]:h-6 [&::-webkit-slider-thumb]:w-3 [&::-webkit-slider-thumb]:appearance-none [&::-webkit-slider-thumb]:bg-[#666]"
				/>
				<button aria-label="Zoom in" className="ml-3"><svg viewBox="0 0 16 16" className="w-4" stroke="#555" strokeWidth="2"><path d="M8 0v16M0 8h16" /></svg></button>
				<span className="ml-7 w-[58px] text-right">100%</span>
			</div>
		</footer>
	);
}

export default function App() {
	return (
		<div className="flex h-screen flex-col overflow-hidden bg-[#e6eaef] font-['Open_Sans',sans-serif] text-[#222]">
			<TitleBar />
			<TabRow />
			<Ribbon />
			<FormulaBar />
			<main className="mt-[14px] flex min-h-0 flex-1 bg-[#e0edee]">
				<div className="min-w-0 flex-1 overflow-hidden border-r border-[#d5dcdc] bg-white">
					<Sheet />
				</div>
				<div className="mx-[2px] flex w-[38px] flex-col items-center rounded-full bg-[#f4f4f4] py-[11px]">
					<Arrow />
					<div className="mt-3 h-[703px] w-[18px] rounded-full bg-[#707070]" />
					<Arrow className="mt-auto rotate-180" />
				</div>
			</main>
			<SheetTabs />
			<StatusBar />
		</div>
	);
}
